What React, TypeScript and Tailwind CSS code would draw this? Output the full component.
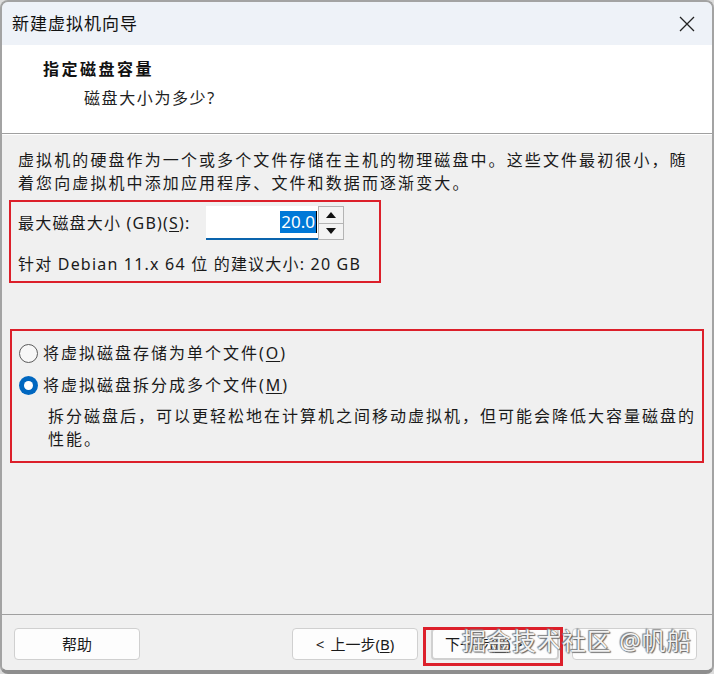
import React from "react";

const font = { fontFamily: '"Noto Sans", "Noto Sans CJK SC", sans-serif' };

const Radio = ({ checked }: { checked?: boolean }) =>
  checked ? (
    <span className="w-[19px] h-[19px] rounded-full bg-[#0067c0] flex items-center justify-center shrink-0">
      <span className="w-[9px] h-[9px] rounded-full bg-white" />
    </span>
  ) : (
    <span className="w-[19px] h-[19px] rounded-full border border-[#5c5c5c] bg-[#f7f7f7] shrink-0" />
  );

const Btn = ({ children, className = "" }: { children?: React.ReactNode; className?: string }) => (
  <div
    className={`h-[32px] flex items-center justify-center rounded-[4px] bg-[#fdfdfd] border border-[#d0d0d0] text-[15px] text-[#1a1a1a] ${className}`}
  >
    {children}
  </div>
);

export default function App() {
  return (
    <div className="w-[714px] h-[674px] bg-[#dcdcdc]" style={font}>
      <div className="w-full h-full flex flex-col rounded-[8px] overflow-hidden border-2 border-[#a3a3a3] border-b-[4px] border-b-[#8e8e8e]">
        {/* title bar */}
        <div className="h-[43px] shrink-0 bg-[#eef2f8] flex items-center justify-between pl-[10px] pr-[14px]">
          <span className="text-[17px] tracking-[1px] text-[#111]">新建虚拟机向导</span>
          <svg width="18" height="18" viewBox="0 0 18 18" className="mr-[2px]">
            <path d="M2 2 L16 16 M16 2 L2 16" stroke="#222" strokeWidth="1.3" fill="none" />
          </svg>
        </div>

        {/* header */}
        <div className="h-[89px] shrink-0 bg-white border-b border-[#a0a0a0] pl-[41px] pt-[12px]">
          <div className="text-[16px] font-bold tracking-[2.5px] text-[#111] leading-[24px]">指定磁盘容量</div>
          <div className="text-[16px] tracking-[1.6px] text-[#222] leading-[24px] mt-[5px] pl-[41px]">磁盘大小为多少?</div>
        </div>

        {/* body */}
        <div className="flex-1 bg-[#f0f0f0] border-t border-white">
          <p className="pl-[16px] pr-[14px] pt-[14px] text-[16px] leading-[23px] tracking-[2.1px] text-[#1a1a1a]">
            虚拟机的硬盘作为一个或多个文件存储在主机的物理磁盘中。这些文件最初很小，随着您向虚拟机中添加应用程序、文件和数据而逐渐变大。
          </p>

          <div className="ml-[7px] mt-[5px] w-[372px] h-[83px] border-2 border-[#dc1f2a] pl-[7px] pt-[4px]">
            <div className="flex items-center h-[34px]">
              <span className="text-[16px] tracking-[1.2px] text-[#1a1a1a] w-[188px]">
                最大磁盘大小 (GB)(<span className="underline underline-offset-2">S</span>):
              </span>
              <div className="w-[112px] h-[34px] bg-white border-b-2 border-[#0a64ad] flex items-center justify-end pr-[1px]">
                <span className="bg-[#0078d7] text-white text-[17px] leading-[22px] px-[1px]">20.0</span>
                <span className="w-[1px] h-[22px] bg-black" />
              </div>
              <div className="w-[26px] h-[34px] flex flex-col border border-[#b4b4b4] bg-[#f3f3f3]">
                <div className="flex-1 flex items-center justify-center border-b border-[#b4b4b4]">
                  <svg width="10" height="6" viewBox="0 0 10 6"><path d="M0 6 L5 0 L10 6 Z" fill="#111" /></svg>
                </div>
                <div className="flex-1 flex items-center justify-center">
                  <svg width="10" height="6" viewBox="0 0 10 6"><path d="M0 0 L10 0 L5 6 Z" fill="#111" /></svg>
                </div>
              </div>
            </div>
            <div className="mt-[13px] text-[16px] leading-[23px] tracking-[1.2px] text-[#1a1a1a]">
              针对 Debian 11.x 64 位 的建议大小: 20 GB
            </div>
          </div>

          <div className="ml-[8px] mt-[46px] w-[694px] h-[134px] border-2 border-[#dc1f2a] pt-[6px] pl-[7px]">
            <div className="h-[32px] flex items-center gap-[5px]">
              <Radio />
              <span className="text-[16px] tracking-[2px] text-[#1a1a1a]">
                将虚拟磁盘存储为单个文件(<span className="underline underline-offset-2">O</span>)
              </span>
            </div>
            <div className="h-[32px] flex items-center gap-[5px]">
              <Radio checked />
              <span className="text-[16px] tracking-[2px] text-[#1a1a1a]">
                将虚拟磁盘拆分成多个文件(<span className="underline underline-offset-2">M</span>)
              </span>
            </div>
            <p className="mt-[4px] pl-[29px] pr-0 text-[16px] leading-[23px] tracking-[2px] text-[#1a1a1a]">
              拆分磁盘后，可以更轻松地在计算机之间移动虚拟机，但可能会降低大容量磁盘的性能。
            </p>
          </div>
        </div>

        {/* footer */}
        <div className="h-[56px] shrink-0 bg-[#f0f0f0] border-t border-[#a0a0a0] relative">
          <div className="flex items-start pt-[13px] pl-[12px]">
            <Btn className="w-[126px]">帮助</Btn>
            <Btn className="w-[126px] ml-[152px] gap-[6px]">
              <span>&lt;</span>
              <span>
                上一步(<span className="underline underline-offset-2">B</span>)
              </span>
            </Btn>
            <div className="relative ml-[13px]">
              <Btn className="w-[128px] border-2 border-[#0067c0] justify-start pl-[12px]">
                下一步(<span className="underline underline-offset-2">N</span>) &gt;
              </Btn>
              <span className="absolute left-[-8px] top-[-1px] w-[140px] h-[39px] border-[3px] border-[#dc1f2a]" />
            </div>
            <Btn className="w-[125px] ml-[13px]" />
          </div>
          <span
            className="absolute left-[460px] top-[11px] text-[24px] leading-[30px] tracking-[1px] text-[#f2f2f2] whitespace-nowrap"
            style={{ textShadow: "0 0 1px #555, 1px 1px 1px #666, -1px -1px 1px #888" }}
          >
            掘金技术社区 @帆船
          </span>
        </div>
      </div>
    </div>
  );
}
